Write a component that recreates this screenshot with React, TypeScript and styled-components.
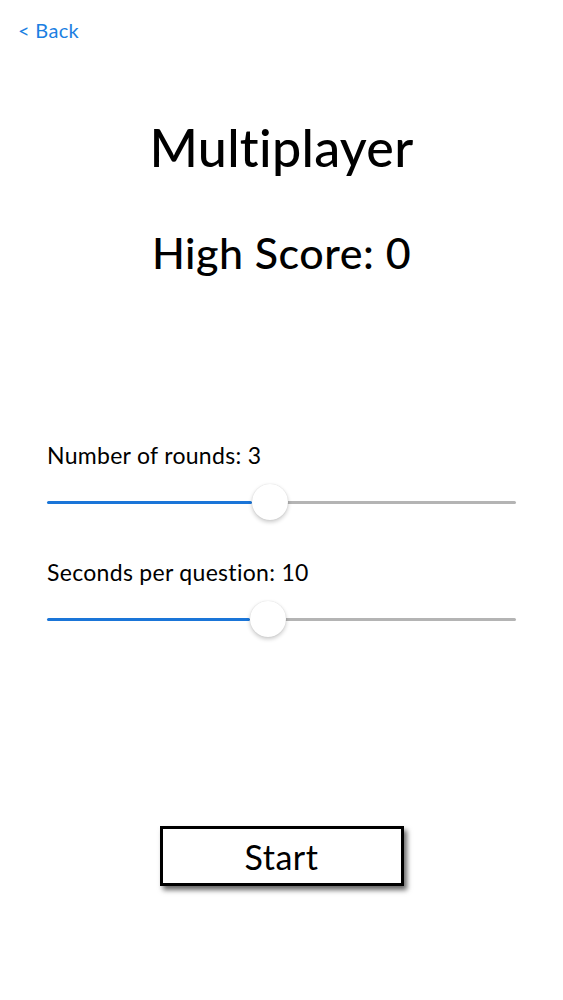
import React from "react";
import styled, { createGlobalStyle } from "styled-components";

const GlobalStyle = createGlobalStyle`
  * { box-sizing: border-box; }
  html, body { margin: 0; padding: 0; background: #ffffff; }
  body { font-family: "Lato", "Noto Sans", sans-serif; color: #000; }
`;

const Page = styled.div`
  width: 563px;
  height: 1000px;
  display: flex;
  flex-direction: column;
  padding: 17px 47px 0 47px;
`;

const BackLink = styled.a`
  align-self: flex-start;
  margin-left: -29px;
  font-size: 20px;
  color: #1b7fe2;
  text-decoration: none;
  line-height: 26px;
  letter-spacing: 0.3px;
`;

const Title = styled.h1`
  margin: 69px 0 0 0;
  text-align: center;
  font-size: 52px;
  font-weight: 500;
  line-height: 70px;
  letter-spacing: 0.3px;
`;

const Score = styled.h2`
  margin: 44px 0 0 0;
  text-align: center;
  font-size: 43px;
  font-weight: 500;
  line-height: 54px;
  letter-spacing: 0.5px;
`;

const Settings = styled.div`
  display: flex;
  flex-direction: column;
  gap: 38px;
  margin-top: 161px;
`;

const Setting = styled.div`
  display: flex;
  flex-direction: column;
  gap: 15px;
`;

const Label = styled.div`
  font-size: 23px;
  line-height: 28px;
  letter-spacing: 0.3px;
`;

const Track = styled.div`
  position: relative;
  height: 36px;
  width: 469px;
`;

const Rail = styled.div<{ $active?: boolean }>`
  position: absolute;
  top: 17px;
  left: 0;
  height: 3px;
  background: ${(p) => (p.$active ? "#1a75d8" : "#b4b4b4")};
  border-radius: 2px;
`;

const Thumb = styled.div`
  position: absolute;
  top: 0;
  width: 36px;
  height: 36px;
  margin-left: -18px;
  border-radius: 50%;
  background: #ffffff;
  box-shadow: 0 2px 4px rgba(0, 0, 0, 0.22), 0 0 1px rgba(0, 0, 0, 0.15);
`;

const Footer = styled.div`
  display: flex;
  justify-content: center;
  margin-top: 189px;
`;

const StartButton = styled.button`
  width: 244px;
  height: 60px;
  background: #ffffff;
  border: 3px solid #000;
  box-shadow: 3px 4px 5px rgba(0, 0, 0, 0.6);
  font-family: inherit;
  font-size: 34px;
  color: #000;
  padding: 0;
  letter-spacing: 0.5px;
`;

const Slider = ({ label, pos }: { label: string; pos: number }) => (
  <Setting>
    <Label>{label}</Label>
    <Track>
      <Rail style={{ left: `${pos}px`, right: 0 }} />
      <Rail $active style={{ width: `${pos - 18}px` }} />
      <Thumb style={{ left: `${pos}px` }} />
    </Track>
  </Setting>
);

export default function App() {
  return (
    <>
      <GlobalStyle />
      <Page>
        <BackLink href="#">&lt; Back</BackLink>
        <Title>Multiplayer</Title>
        <Score>High Score: 0</Score>
        <Settings>
          <Slider label="Number of rounds: 3" pos={223} />
          <Slider label="Seconds per question: 10" pos={221} />
        </Settings>
        <Footer>
          <StartButton>Start</StartButton>
        </Footer>
      </Page>
    </>
  );
}
